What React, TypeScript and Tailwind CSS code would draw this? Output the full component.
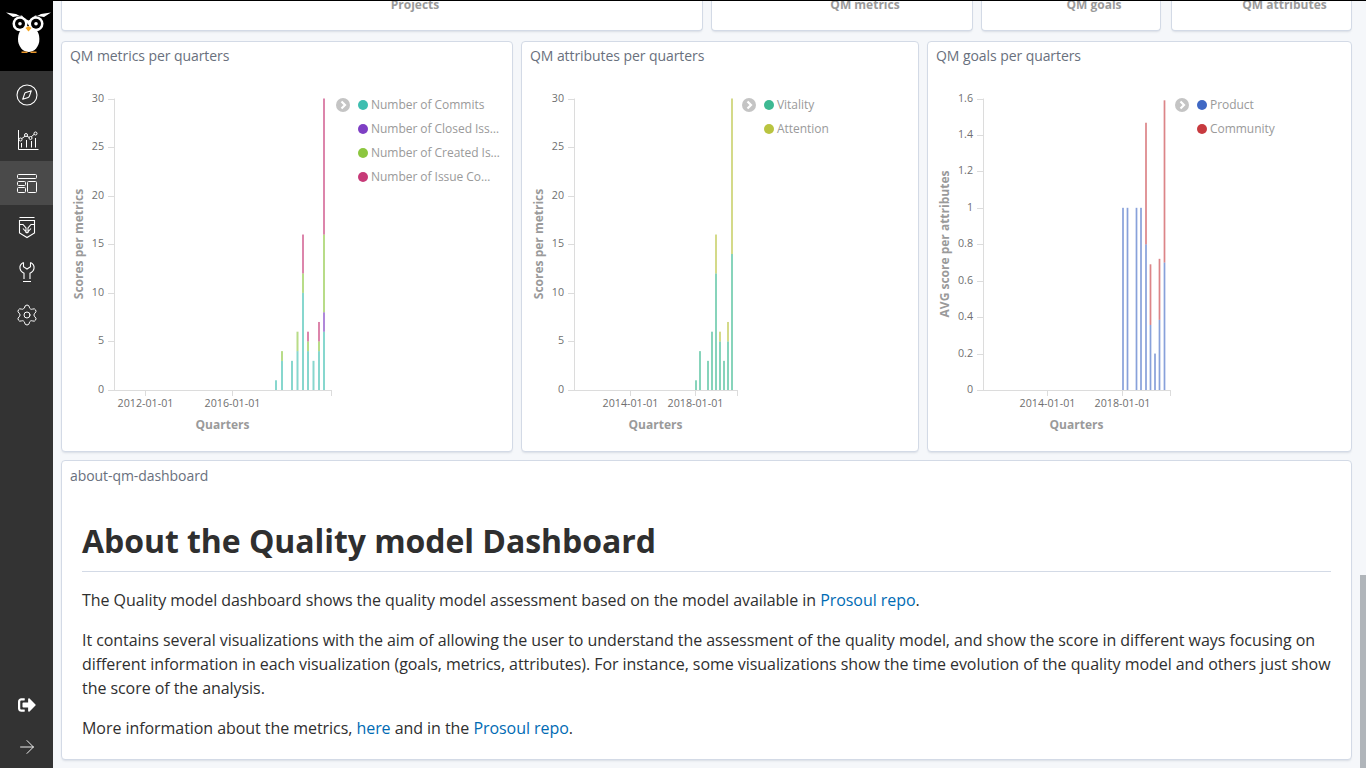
import { Compass, Settings, ArrowRight } from 'lucide-react';
import { FaSignOutAlt } from 'react-icons/fa';

type Segment = { value: number; color: string };
type Bar = { x: number; segments: Segment[] };
type ChartProps = {
  left: number;
  width: number;
  axisLeft: number;
  axisRight: number;
  yMax: number;
  yTicks: string[];
  yTitle: string;
  yTitleX: number;
  xTicks: { x: number; label: string }[];
  xTitleX: number;
  bars: Bar[];
  barWidth: number;
};

const font = "'Open Sans', sans-serif";

const teal = '#3ebeb0';
const purple = '#7e3fc4';
const lime = '#8cc63f';
const pink = '#c73a78';
const vitality = '#3eb992';
const attention = '#b9c440';
const product = '#3f68c4';
const community = '#c73a3f';

function seg(color: string, value: number): Segment {
  return { color, value };
}

const metricBars: Bar[] = [
  { x: 276, segments: [seg(teal, 1)] },
  { x: 282, segments: [seg(teal, 3), seg(lime, 1)] },
  { x: 292, segments: [seg(teal, 3)] },
  { x: 297.5, segments: [seg(teal, 4), seg(lime, 2)] },
  { x: 303, segments: [seg(teal, 10), seg(lime, 2), seg(pink, 4)] },
  { x: 308, segments: [seg(teal, 4), seg(lime, 1), seg(pink, 1)] },
  { x: 313.5, segments: [seg(teal, 3)] },
  { x: 319, segments: [seg(teal, 4), seg(lime, 1), seg(pink, 2)] },
  { x: 324, segments: [seg(teal, 6), seg(purple, 2), seg(lime, 8), seg(pink, 14)] },
];

const attributeBars: Bar[] = [
  { x: 696, segments: [seg(vitality, 1)] },
  { x: 700, segments: [seg(vitality, 4)] },
  { x: 708, segments: [seg(vitality, 3)] },
  { x: 712, segments: [seg(vitality, 6)] },
  { x: 716, segments: [seg(vitality, 12), seg(attention, 4)] },
  { x: 720, segments: [seg(vitality, 5), seg(attention, 1)] },
  { x: 724, segments: [seg(vitality, 3)] },
  { x: 728, segments: [seg(vitality, 5), seg(attention, 2)] },
  { x: 732, segments: [seg(vitality, 14), seg(attention, 16)] },
];

const goalBars: Bar[] = [
  { x: 1123, segments: [seg(product, 1)] },
  { x: 1127.5, segments: [seg(product, 1)] },
  { x: 1136.5, segments: [seg(product, 1)] },
  { x: 1141, segments: [seg(product, 1)] },
  { x: 1146, segments: [seg(product, 0.8), seg(community, 0.667)] },
  { x: 1150.5, segments: [seg(product, 0.357), seg(community, 0.333)] },
  { x: 1155, segments: [seg(product, 0.2)] },
  { x: 1159.5, segments: [seg(product, 0.385), seg(community, 0.335)] },
  { x: 1164.5, segments: [seg(product, 0.7), seg(community, 0.89)] },
];

const TOP = 98.5;
const BASE = 390;

function Chart(props: ChartProps) {
  const scale = (BASE - TOP) / props.yMax;
  const step = (BASE - TOP) / (props.yTicks.length - 1);
  return (
    <svg width={props.width} height={378} viewBox={`${props.left} 72 ${props.width} 378`} className="shrink-0" style={{ fontFamily: font }}>
      <line x1={props.axisLeft + 0.5} y1={TOP} x2={props.axisLeft + 0.5} y2={BASE} stroke="#dcdcdc" />
      <line x1={props.axisLeft} y1={BASE + 0.5} x2={props.axisRight + 0.5} y2={BASE + 0.5} stroke="#dcdcdc" />
      {props.yTicks.map((label, i) => {
        const y = Math.round(BASE - step * i) + 0.5;
        return (
          <g key={label}>
            <line x1={props.axisLeft - 6} y1={y} x2={props.axisLeft} y2={y} stroke="#dcdcdc" />
            <text x={props.axisLeft - 10} y={BASE - step * i + 3} textAnchor="end" fontSize="10.7" fill="#6f6f6f">{label}</text>
          </g>
        );
      })}
      {props.xTicks.map((tick) => (
        <g key={tick.label}>
          <line x1={tick.x + 0.5} y1={BASE} x2={tick.x + 0.5} y2={BASE + 6} stroke="#dcdcdc" />
          <text x={tick.x + 0.5} y={BASE + 17} textAnchor="middle" fontSize="10.7" fill="#6f6f6f">{tick.label}</text>
        </g>
      ))}
      <line x1={props.axisRight + 0.5} y1={BASE} x2={props.axisRight + 0.5} y2={BASE + 6} stroke="#dcdcdc" />
      <text x={props.xTitleX} y={429} textAnchor="middle" fontSize="12" fontWeight="700" fill="#9a9a9a">Quarters</text>
      <text
        transform={`translate(${props.yTitleX} 244) rotate(-90)`}
        textAnchor="middle"
        fontSize="12"
        fontWeight="700"
        fill="#9a9a9a"
      >
        {props.yTitle}
      </text>
      {props.bars.map((bar) => {
        let acc = 0;
        return (
          <g key={bar.x}>
            {bar.segments.map((s, i) => {
              const h = s.value * scale;
              acc += h;
              return <rect key={i} x={bar.x - props.barWidth / 2} y={BASE - acc} width={props.barWidth} height={h} fill={s.color} opacity="0.62" />;
            })}
          </g>
        );
      })}
    </svg>
  );
}

function Legend({ items }: { items: { label: string; color: string }[] }) {
  return (
    <div className="flex mt-[21px] min-w-0">
      <div className="w-[14px] h-6 flex items-center shrink-0">
        <svg width="14" height="14" viewBox="0 0 14 14">
          <circle cx="7" cy="7" r="7" fill="#c4c4c4" />
          <path d="M5.5 3.5 9 7l-3.5 3.5" fill="none" stroke="#fff" strokeWidth="2.2" />
        </svg>
      </div>
      <ul className="ml-[8px] flex flex-col">
        {items.map((item) => (
          <li key={item.label} className="h-6 flex items-center text-xs tracking-[-0.04px] text-[#9a9a9a] whitespace-nowrap">
            <span className="w-[10px] h-[10px] rounded-full mr-[3px] shrink-0" style={{ backgroundColor: item.color }} />
            {item.label}
          </li>
        ))}
      </ul>
    </div>
  );
}

function Panel({ title, className, titleClass = 'pt-[4px]', children }: { title: string; className: string; titleClass?: string; children: React.ReactNode }) {
  return (
    <div className={`bg-white border border-[#d3dae6] rounded-[4px] shadow-[0_2px_2px_-1px_rgba(152,162,179,0.3)] overflow-hidden flex flex-col ${className}`}>
      <div className={`h-[30px] pl-2 text-sm leading-5 tracking-[-0.07px] text-[#69707d] shrink-0 ${titleClass}`}>{title}</div>
      {children}
    </div>
  );
}

function TopCard({ label, className }: { label: string; className: string }) {
  return (
    <div className={`h-[30px] bg-white border border-t-0 border-[#d3dae6] rounded-b-[4px] shadow-[0_2px_2px_-1px_rgba(152,162,179,0.3)] text-center overflow-hidden ${className}`}>
      <div className="text-xs font-bold leading-4 text-[#9a9a9a] -mt-[4px]">{label}</div>
    </div>
  );
}

function Logo() {
  return (
    <svg width="53" height="56" viewBox="0 0 53 56">
      <path d="M6 11.5 16 13 28.5 19.5 41 13 51 11.5 44 16 35 14.5 28.5 24 22 14.5 13 16Z" fill="#fff" />
      <ellipse cx="28.7" cy="38" rx="10.7" ry="13" fill="#fff" />
      <circle cx="20" cy="22.7" r="7.5" fill="#fff" />
      <circle cx="36" cy="22.7" r="7.5" fill="#fff" />
      <circle cx="20" cy="22.7" r="5" fill="#000" />
      <circle cx="36" cy="22.7" r="5" fill="#000" />
      <circle cx="20" cy="22.7" r="1.8" fill="#fff" />
      <circle cx="36" cy="22.7" r="1.8" fill="#fff" />
      <path d="M25.5 27 28.5 25 31.5 27 28.5 30.5Z" fill="#f5a623" />
      <path d="M21.5 50.5h6v1.5h-6ZM30.5 50.5h6v1.5h-6Z" fill="#e8952a" />
    </svg>
  );
}

function ChartIcon() {
  return (
    <svg width="24" height="24" viewBox="0 0 24 24" fill="none" stroke="#fff" strokeWidth="1">
      <path d="M3.5 3v19.5h20" />
      <path d="M5.5 12.5 11 8.5l4 2.5 5-4.5" />
      <circle cx="5.5" cy="12.5" r="1.5" fill="#333" />
      <circle cx="11" cy="8" r="1.5" fill="#333" />
      <circle cx="15.5" cy="11" r="1.5" fill="#333" />
      <circle cx="20.5" cy="6.5" r="1.5" fill="#333" />
      <path d="M6.5 16v4.5M11.5 13v7.5M16.5 14v6.5M20.5 11v9.5" />
    </svg>
  );
}

function DashboardIcon() {
  return (
    <svg width="24" height="24" viewBox="0 0 24 24" fill="none" stroke="#fff" strokeWidth="1">
      <rect x="2.5" y="3.5" width="19" height="4" rx="1" />
      <rect x="2.5" y="10.5" width="8" height="4" rx="1" />
      <rect x="2.5" y="16.5" width="8" height="5" rx="1" />
      <rect x="12.5" y="10.5" width="9" height="11" rx="1" />
    </svg>
  );
}

function ShieldIcon() {
  return (
    <svg width="24" height="24" viewBox="0 0 24 24" fill="none" stroke="#fff" strokeWidth="1.1">
      <path d="M4.5 2.5h15M4.5 5.5h15V18L12 22.5 4.5 18Z" />
      <path d="M4.5 9.5h3.5L11 13v5M19.5 9.5H16L13 13v5M8 13.5 12 18l4-4.5" />
    </svg>
  );
}

function WrenchIcon() {
  return (
    <svg width="24" height="24" viewBox="0 0 24 24" fill="none" stroke="#fff" strokeWidth="1.1">
      <path d="M8.5 3.5C5.8 4.8 4.6 7 5 9.5c.4 2.4 2.2 4 4 4.7V20M15.5 3.5c2.7 1.3 3.9 3.5 3.5 6-.4 2.4-2.2 4-4 4.7V20" />
      <path d="M8.5 3.5v4.3L12 10l3.5-2.2V3.5M8 22.5h8" />
    </svg>
  );
}

export default function App() {
  return (
    <div className="h-screen w-[1366px] flex overflow-hidden bg-[#f5f7fa] relative" style={{ fontFamily: font }}>
      {/* sidebar */}
      <aside className="w-[53px] shrink-0 bg-[#333333] flex flex-col justify-between">
        <div>
          <div className="h-[71px] bg-black pt-[1px]">
            <Logo />
          </div>
          <div className="mt-[2px] flex flex-col">
            <div className="h-11 flex items-center justify-center">
              <Compass size={24} strokeWidth={1.1} color="#fff" />
            </div>
            <div className="h-11 flex items-center justify-center">
              <ChartIcon />
            </div>
            <div className="h-11 flex items-center justify-center bg-[#4a4a4a]">
              <DashboardIcon />
            </div>
            <div className="h-11 flex items-center justify-center">
              <ShieldIcon />
            </div>
            <div className="h-11 flex items-center justify-center">
              <WrenchIcon />
            </div>
            <div className="h-11 flex items-center justify-center">
              <Settings size={24} strokeWidth={1} color="#fff" />
            </div>
          </div>
        </div>
        <div>
          <div className="h-[42px] flex items-center justify-center">
            <FaSignOutAlt size={18} color="#fff" />
          </div>
          <div className="h-[42px] flex items-center justify-center">
            <ArrowRight size={22} strokeWidth={1} color="#fff" />
          </div>
        </div>
      </aside>

      {/* dashboard */}
      <main className="flex-1 border-t border-black pl-2 pr-[14px]">
        <div className="flex">
          <TopCard label="Projects" className="w-[642px] pl-[66px]" />
          <TopCard label="QM metrics" className="w-[262px] ml-2 pl-[46px]" />
          <TopCard label="QM goals" className="w-[180px] ml-2 pl-[46px]" />
          <TopCard label="QM attributes" className="w-[181px] ml-[10px] pl-[46px]" />
        </div>

        <div className="flex gap-2 mt-[10px] h-[411px]">
          <Panel title="QM metrics per quarters" className="w-[452px]">
            <div className="flex">
              <Chart
                left={62}
                width={274}
                axisLeft={114}
                axisRight={331}
                yMax={30}
                yTicks={['0', '5', '10', '15', '20', '25', '30']}
                yTitle="Scores per metrics"
                yTitleX={83}
                xTicks={[{ x: 145, label: '2012-01-01' }, { x: 232, label: '2016-01-01' }]}
                xTitleX={222.5}
                bars={metricBars}
                barWidth={2}
              />
              <Legend
                items={[
                  { label: 'Number of Commits', color: teal },
                  { label: 'Number of Closed Iss…', color: purple },
                  { label: 'Number of Created Is…', color: lime },
                  { label: 'Number of Issue Co…', color: pink },
                ]}
              />
            </div>
          </Panel>
          <Panel title="QM attributes per quarters" className="w-[398px]">
            <div className="flex">
              <Chart
                left={522}
                width={220}
                axisLeft={574}
                axisRight={737}
                yMax={30}
                yTicks={['0', '5', '10', '15', '20', '25', '30']}
                yTitle="Scores per metrics"
                yTitleX={543}
                xTicks={[{ x: 630, label: '2014-01-01' }, { x: 695, label: '2018-01-01' }]}
                xTitleX={655.5}
                bars={attributeBars}
                barWidth={2}
              />
              <Legend
                items={[
                  { label: 'Vitality', color: vitality },
                  { label: 'Attention', color: attention },
                ]}
              />
            </div>
          </Panel>
          <Panel title="QM goals per quarters" className="w-[425px]">
            <div className="flex">
              <Chart
                left={928}
                width={247}
                axisLeft={983}
                axisRight={1170}
                yMax={1.6}
                yTicks={['0', '0.2', '0.4', '0.6', '0.8', '1', '1.2', '1.4', '1.6']}
                yTitle="AVG score per attributes"
                yTitleX={949}
                xTicks={[{ x: 1047, label: '2014-01-01' }, { x: 1122, label: '2018-01-01' }]}
                xTitleX={1076.5}
                bars={goalBars}
                barWidth={1.7}
              />
              <Legend
                items={[
                  { label: 'Product', color: product },
                  { label: 'Community', color: community },
                ]}
              />
            </div>
          </Panel>
        </div>

        <Panel title="about-qm-dashboard" titleClass="pt-[5px]" className="mt-2 h-[300px] w-[1291px]">
          <div className="px-5 pt-[30px] text-base leading-6 tracking-[-0.055px] text-[#2f2f2f]">
            <h1 className="text-[32px] leading-10 font-bold tracking-[-0.06px] pb-[10px] border-b border-[#d3dae6]">About the Quality model Dashboard</h1>
            <p className="mt-4">
              The Quality model dashboard shows the quality model assessment based on the model available in{' '}
              <span className="text-[#006bb4]">Prosoul repo</span>.
            </p>
            <p className="mt-4">
              It contains several visualizations with the aim of allowing the user to understand the assessment of the quality model, and show the score in different ways focusing on different information in each visualization (goals, metrics, attributes). For instance, some visualizations show the time evolution of the quality model and others just show the score of the analysis.
            </p>
            <p className="mt-4">
              More information about the metrics, <span className="text-[#006bb4]">here</span> and in the{' '}
              <span className="text-[#006bb4]">Prosoul repo</span>.
            </p>
          </div>
        </Panel>
      </main>

      {/* scrollbar thumb */}
      <div className="absolute right-0 top-[575px] bottom-0 w-[6px] bg-[#b0b5ba]" />
    </div>
  );
}
